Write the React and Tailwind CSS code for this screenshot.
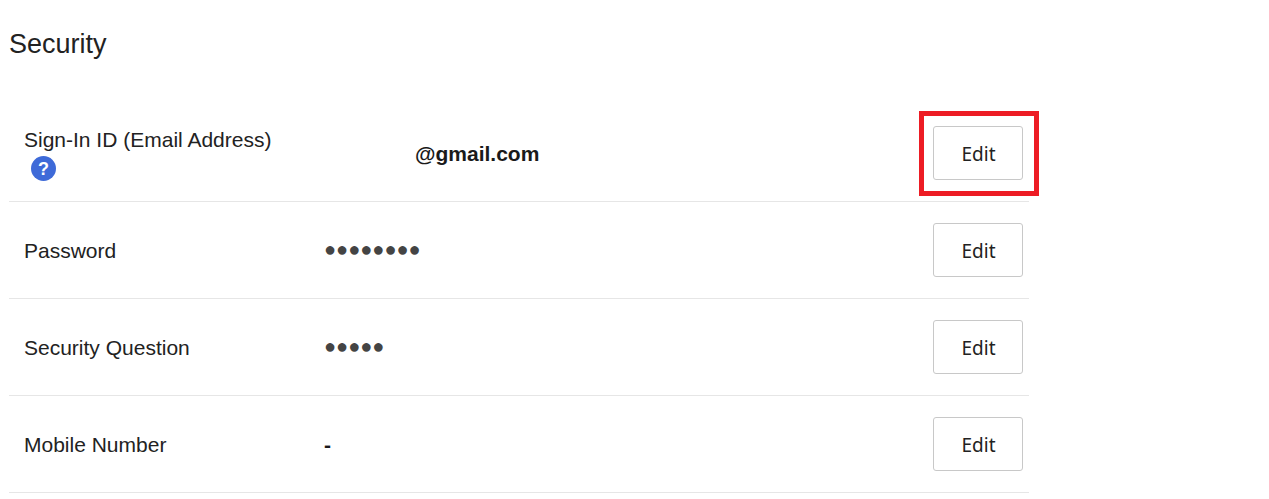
const rows = [
  { label: 'Sign-In ID (Email Address)', help: true, value: '@gmail.com', valueClass: 'pt-[2px] pl-[91px] font-bold text-[#1a1a1a] text-[21px]', outlined: true },
  { label: 'Password', labelClass: 'pt-[2px]', value: '●●●●●●●●', valueClass: 'pb-[2px] text-[#444444] text-[20px]' },
  { label: 'Security Question', labelClass: 'pt-[2px]', value: '●●●●●', valueClass: 'pb-[2px] text-[#444444] text-[20px]' },
  { label: 'Mobile Number', labelClass: 'pt-[2px]', value: '-', valueClass: 'pt-[2px] font-bold text-[#1a1a1a] text-[21px]' },
]

function HelpIcon() {
  return (
    <span className="mt-[1px] ml-[7px] flex h-[25px] w-[25px] translate-y-[1px] items-center justify-center rounded-full bg-[#3e6ad8] text-[18px] leading-none font-bold text-white">
      ?
    </span>
  )
}

export default function App() {
  return (
    <div className="h-[499px] overflow-hidden bg-white pl-[9px] font-['Liberation_Sans',Arial,sans-serif] text-[#222222]">
      <h1 className="pt-[28px] pb-[45px] text-[27px] leading-[32px] font-normal text-[#222222]">Security</h1>
      <div className="w-[1020px]">
        {rows.map((row) => (
          <div key={row.label} className="flex items-center border-b border-[#e6e6e6] py-[21px] pr-[6px] pl-[15px]">
            <div className={`w-[300px] text-[21px] leading-[28px] ${row.labelClass || ''}`}>
              <div>{row.label}</div>
              {row.help && <HelpIcon />}
            </div>
            <div className={`flex-1 leading-[28px] ${row.valueClass}`}>{row.value}</div>
            <div className="relative">
              <button className="flex h-[54px] w-[90px] items-center justify-center rounded-[3px] border border-[#c8c8c8] bg-white pt-[2px] pl-[1px] font-['Noto_Sans',sans-serif] text-[19px] text-[#222222]">
                Edit
              </button>
              {row.outlined && (
                <div className="absolute top-[-15px] right-[-16px] bottom-[-16px] left-[-14px] border-[5px] border-[#ed1c24]" />
              )}
            </div>
          </div>
        ))}
      </div>
    </div>
  )
}
